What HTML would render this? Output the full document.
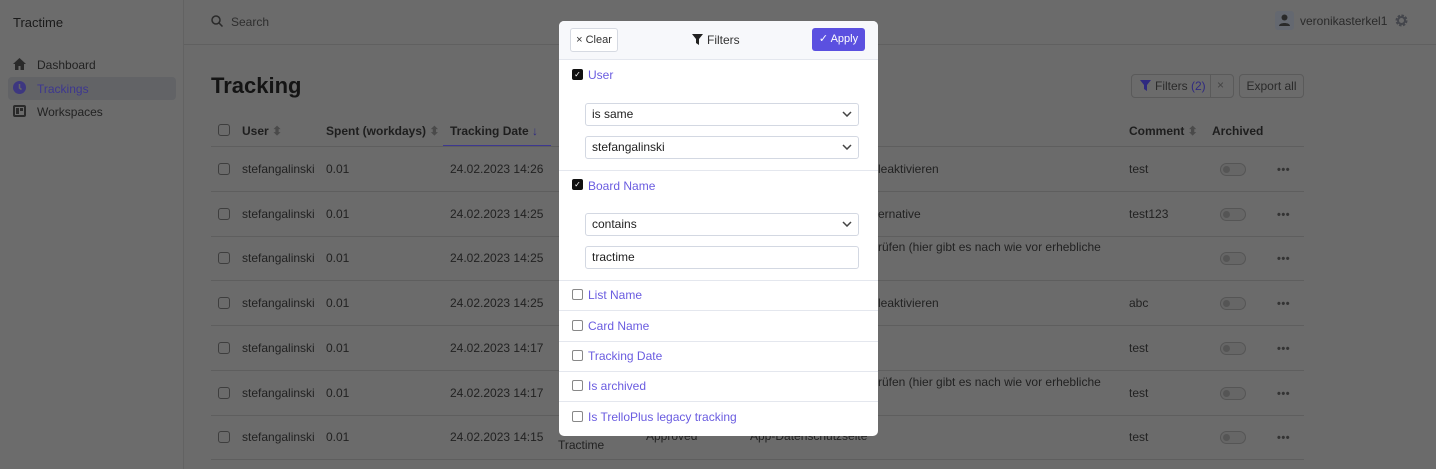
<!DOCTYPE html>
<html><head><meta charset="utf-8"><style>
*{box-sizing:border-box;margin:0;padding:0}
body{width:1436px;height:469px;overflow:hidden;background:#6b6b6b;font-family:"Liberation Sans",sans-serif;color:#222;position:relative;font-size:12px}
.a{position:absolute;white-space:nowrap}
.side{position:absolute;left:0;top:0;width:184px;height:469px;background:#6c6c6c;border-right:1px solid #626262}
.hl{position:absolute;left:184px;right:0;height:1px;background:#606060}
.cb{position:absolute;width:12px;height:12px;border:1.3px solid #3e3e3e;border-radius:3px}
.tog{position:absolute;width:26px;height:13px;border:1px solid #555;border-radius:7px;background:#666}
.tog:after{content:"";position:absolute;left:2px;top:2px;width:7px;height:7px;border-radius:50%;background:#555}
.dots{position:absolute;font-weight:bold;font-size:11px;color:#333;letter-spacing:0.5px}
.modal{position:absolute;left:559px;top:21px;width:319px;height:415px;background:#fff;border-radius:5px;overflow:hidden}
.mh{position:absolute;left:0;top:0;width:100%;height:39px;background:#f7f8fb;border-bottom:1px solid #e4e7ee}
.sep{position:absolute;left:0;width:100%;height:1px;background:#e4e7ee}
.lab{position:absolute;left:29px;color:#6a5ce0;font-size:12px}
.chk{position:absolute;left:13px;width:11px;height:11px;background:#111;border-radius:2px;color:#fff;font-size:8px;line-height:11px;text-align:center}
.unc{position:absolute;left:13px;width:11px;height:11px;border:1px solid #888;border-radius:2px}
.inp{position:absolute;left:26px;width:274px;height:23px;border:1px solid #d3d8e2;border-radius:3px;padding-left:6px;line-height:21px;color:#222;font-size:12px}
.inp svg{position:absolute;right:6px;top:7px}
</style></head><body>
<div class="side"></div>
<div class="a" style="left:13px;top:15px;font-size:13px;color:#1a1a1a">Tractime</div>
<svg class="a" style="left:13px;top:58px" width="13" height="12" viewBox="0 0 13 12"><path d="M6.5 0L0 6h2v6h3.5V8h2v4H11V6h2z" fill="#2a2a2a"/></svg>
<div class="a" style="left:37px;top:58px;color:#222">Dashboard</div>
<div class="a" style="left:8px;top:77px;width:168px;height:23px;background:#626366;border-radius:4px"></div>
<svg class="a" style="left:13px;top:81px" width="13" height="13" viewBox="0 0 13 13"><circle cx="6.5" cy="6.5" r="6.5" fill="#3d3780"/><path d="M6.5 3v4l2 1.5" stroke="#666" stroke-width="1.5" fill="none"/></svg>
<div class="a" style="left:37px;top:82px;color:#3d3790">Trackings</div>
<svg class="a" style="left:13px;top:105px" width="13" height="12" viewBox="0 0 13 12"><rect x="1" y="1" width="11" height="10" rx="1" stroke="#2a2a2a" stroke-width="2" fill="none"/><rect x="3" y="3" width="3" height="6" fill="#2a2a2a"/><rect x="7" y="3" width="3" height="3" fill="#2a2a2a"/></svg>
<div class="a" style="left:37px;top:105px;color:#222">Workspaces</div>

<svg class="a" style="left:211px;top:15px" width="12" height="12" viewBox="0 0 12 12"><circle cx="5" cy="5" r="4" stroke="#2a2a2a" stroke-width="1.5" fill="none"/><path d="M8 8l3.5 3.5" stroke="#2a2a2a" stroke-width="1.5"/></svg>
<div class="a" style="left:231px;top:15px;color:#2e2e2e">Search</div>
<div class="hl" style="top:44px"></div>
<div class="a" style="left:1275px;top:11px;width:19px;height:19px;background:#646870;border-radius:3px"></div>
<svg class="a" style="left:1279px;top:14px" width="11" height="13" viewBox="0 0 11 13"><circle cx="5.5" cy="3.5" r="3" fill="#2a2a2a"/><path d="M0 12c0-4 11-4 11 0z" fill="#2a2a2a"/></svg>
<div class="a" style="left:1300px;top:14px;color:#2a2a2a">veronikasterkel1</div>
<svg class="a" style="left:1395px;top:14px" width="13" height="13" viewBox="0 0 13 13"><circle cx="6.5" cy="6.5" r="4.5" fill="none" stroke="#44464c" stroke-width="3" stroke-dasharray="2.2 1.3"/><circle cx="6.5" cy="6.5" r="3.5" fill="none" stroke="#44464c" stroke-width="2"/></svg>

<div class="a" style="left:211px;top:73px;font-size:22px;font-weight:bold;color:#141414">Tracking</div>
<div class="a" style="left:1131px;top:74px;width:103px;height:24px;border:1px solid #5a5a5a;border-radius:4px"></div>
<div class="a" style="left:1210px;top:75px;width:1px;height:22px;background:#5a5a5a"></div>
<svg class="a" style="left:1140px;top:80px" width="11" height="11" viewBox="0 0 11 11"><path d="M0 0h11L7 5v6L4 9V5z" fill="#2f2a80"/></svg>
<div class="a" style="left:1155px;top:79px;color:#2a2a2a">Filters <span style="color:#2f2a80">(2)</span></div>
<div class="a" style="left:1217px;top:78px;color:#444">×</div>
<div class="a" style="left:1239px;top:74px;width:65px;height:24px;border:1px solid #5a5a5a;border-radius:4px;text-align:center;line-height:22px;color:#2a2a2a">Export all</div>

<div class="cb" style="left:218px;top:124px"></div>
<div class="a" style="left:242px;top:124px;font-weight:bold;color:#1e1e1e">User <span style="color:#4a4a4a">⬍</span></div>
<div class="a" style="left:326px;top:124px;font-weight:bold;color:#1e1e1e">Spent (workdays) <span style="color:#4a4a4a">⬍</span></div>
<div class="a" style="left:450px;top:124px;font-weight:bold;color:#1e1e1e">Tracking Date <span style="color:#2f2a80">↓</span></div>
<div class="a" style="left:443px;top:145px;width:108px;height:2px;background:#3d3790"></div>
<div class="a" style="left:1129px;top:124px;font-weight:bold;color:#1e1e1e">Comment <span style="color:#4a4a4a">⬍</span></div>
<div class="a" style="left:1212px;top:124px;font-weight:bold;color:#1e1e1e">Archived</div>
<div class="a" style="left:211px;top:146px;width:1093px;height:1px;background:#5e5e5e"></div>

<div id="rows"></div>
<script>
var ts=["14:26","14:25","14:25","14:25","14:17","14:17","14:15"];
var mid=["leaktivieren","ernative","rüfen (hier gibt es nach wie vor erhebliche","leaktivieren","","rüfen (hier gibt es nach wie vor erhebliche",""];
var cm=["test","test123","","abc","test","test","test"];
var h="";
for(var i=0;i<7;i++){var c=169+i*44.7;var tp=c-7;
h+='<div class="cb" style="left:218px;top:'+(c-6)+'px"></div>';
h+='<div class="a" style="left:242px;top:'+tp+'px">stefangalinski</div>';
h+='<div class="a" style="left:326px;top:'+tp+'px">0.01</div>';
h+='<div class="a" style="left:450px;top:'+tp+'px">24.02.2023 '+ts[i]+'</div>';
var mt=mid[i].indexOf("rüfen")==0?c-18:tp;
h+='<div class="a" style="left:878px;top:'+mt+'px">'+mid[i]+'</div>';
h+='<div class="a" style="left:1129px;top:'+tp+'px">'+cm[i]+'</div>';
h+='<div class="tog" style="left:1220px;top:'+(c-6)+'px"></div>';
h+='<div class="dots" style="left:1277px;top:'+(c-5)+'px">•••</div>';
h+='<div class="a" style="left:211px;top:'+Math.round(c+22)+'px;width:1093px;height:1px;background:#5e5e5e"></div>';}
h+='<div class="a" style="left:558px;top:438px">Tractime</div><div class="a" style="left:646px;top:429px">Approved</div><div class="a" style="left:750px;top:429px">App-Datenschutzseite</div>';
document.getElementById("rows").innerHTML=h;
</script>

<div class="modal">
<div class="mh"></div>
<div class="a" style="left:11px;top:7px;width:48px;height:24px;border:1px solid #d6dae2;border-radius:3px;background:#fff;text-align:center;line-height:22px;font-size:11px;color:#333">× Clear</div>
<svg class="a" style="left:133px;top:13px" width="11" height="11" viewBox="0 0 11 11"><path d="M0 0h11L7 5v6L4 9V5z" fill="#222"/></svg>
<div class="a" style="left:148px;top:12px;color:#333">Filters</div>
<div class="a" style="left:253px;top:7px;width:53px;height:23px;background:#5b50e0;border-radius:3px;color:#fff;text-align:center;line-height:23px;font-size:11px">✓ Apply</div>
<div class="chk" style="top:48px">✓</div><div class="lab" style="top:47px">User</div>
<div class="inp" style="top:82px">is same<svg width="10" height="6" viewBox="0 0 10 6"><path d="M1 1l4 4 4-4" stroke="#444" stroke-width="1.5" fill="none"/></svg></div>
<div class="inp" style="top:115px">stefangalinski<svg width="10" height="6" viewBox="0 0 10 6"><path d="M1 1l4 4 4-4" stroke="#444" stroke-width="1.5" fill="none"/></svg></div>
<div class="sep" style="top:149px"></div>
<div class="chk" style="top:158px">✓</div><div class="lab" style="top:158px">Board Name</div>
<div class="inp" style="top:192px">contains<svg width="10" height="6" viewBox="0 0 10 6"><path d="M1 1l4 4 4-4" stroke="#444" stroke-width="1.5" fill="none"/></svg></div>
<div class="inp" style="top:225px">tractime</div>
<div class="sep" style="top:259px"></div>
<div class="unc" style="top:268px"></div><div class="lab" style="top:267px">List Name</div>
<div class="sep" style="top:289px"></div>
<div class="unc" style="top:299px"></div><div class="lab" style="top:298px">Card Name</div>
<div class="sep" style="top:320px"></div>
<div class="unc" style="top:329px"></div><div class="lab" style="top:328px">Tracking Date</div>
<div class="sep" style="top:350px"></div>
<div class="unc" style="top:359px"></div><div class="lab" style="top:358px">Is archived</div>
<div class="sep" style="top:380px"></div>
<div class="unc" style="top:390px"></div><div class="lab" style="top:389px">Is TrelloPlus legacy tracking</div>
</div>
</body></html>
